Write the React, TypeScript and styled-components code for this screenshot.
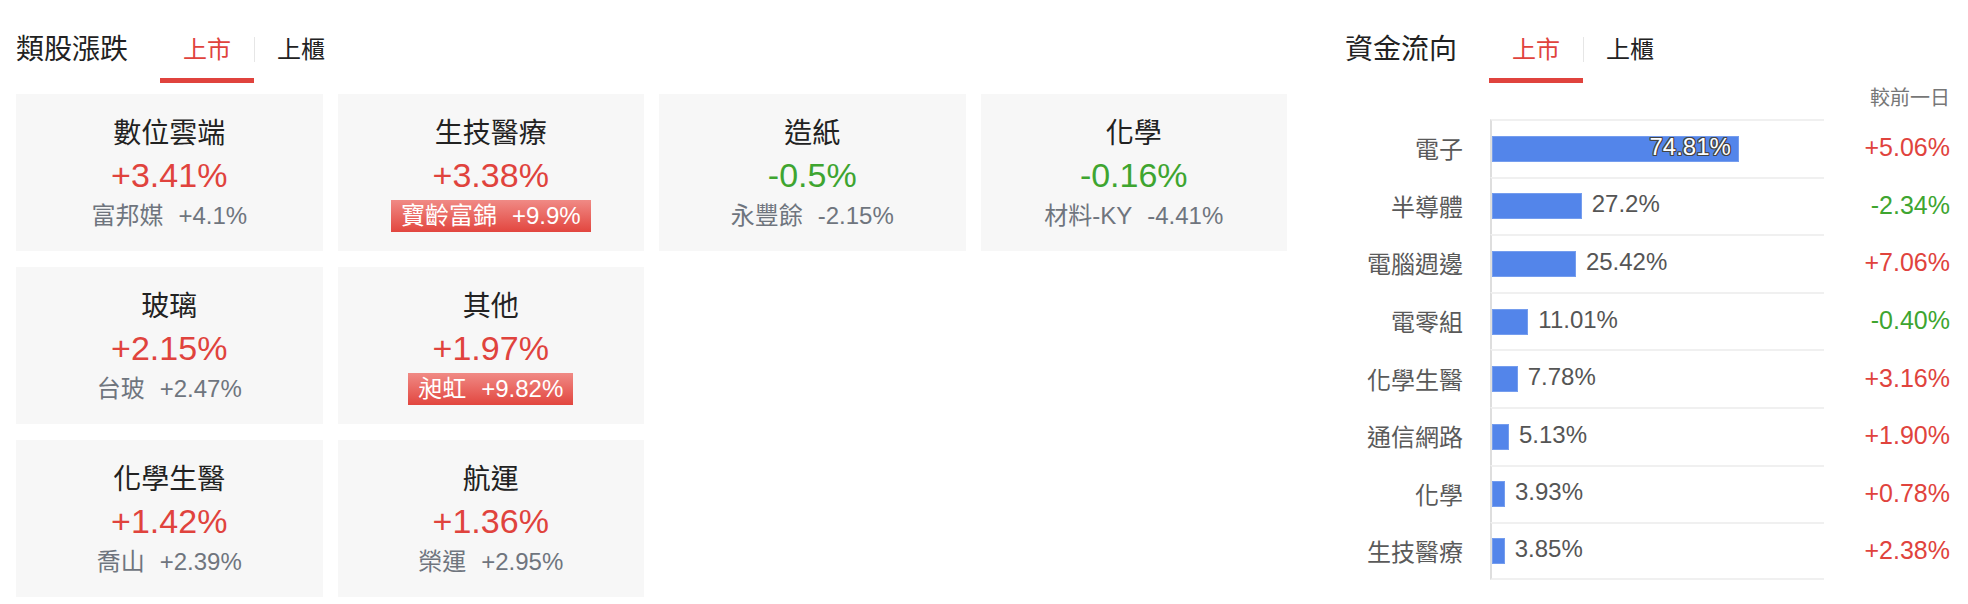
import React from "react";
import styled, { createGlobalStyle, css } from "styled-components";

const RED = "#e0433d";
const GREEN = "#3ea530";

const GlobalStyle = createGlobalStyle`
  html, body { margin: 0; padding: 0; background: #fff; }
  body {
    font-family: "Liberation Sans", "Noto Sans CJK TC", sans-serif;
    color: #222;
  }
  * { box-sizing: border-box; }
`;

const Page = styled.div`
  display: flex;
  gap: 58px;
  width: 1968px;
  padding: 31px 18px 0 16px;
`;

const LeftSection = styled.section`
  flex: none;
  width: 1271px;
`;

const RightSection = styled.section`
  flex: 1;
  min-width: 0;
`;

const Header = styled.div`
  display: flex;
  align-items: flex-start;
`;

const Title = styled.h2`
  margin: 0 32px 0 0;
  font-size: 28px;
  font-weight: 400;
  line-height: 38px;
  color: #222;
`;

const Tabs = styled.div`
  display: flex;
`;

const Tab = styled.div<{ $active?: boolean; $divider?: boolean }>`
  position: relative;
  padding: 0 23px 9px;
  font-size: 24px;
  line-height: 38px;
  color: ${(p) => (p.$active ? RED : "#222")};
  border-bottom: 5px solid ${(p) => (p.$active ? RED : "transparent")};
  cursor: pointer;
  ${(p) =>
    p.$divider &&
    css`
      &::before {
        content: "";
        position: absolute;
        left: 0;
        top: 6px;
        width: 1px;
        height: 25px;
        background: #e6e6e6;
      }
    `}
`;

const Grid = styled.div`
  display: grid;
  grid-template-columns: repeat(4, 1fr);
  gap: 16px 15px;
  margin-top: 11px;
`;

const Card = styled.div<{ $row: number; $col: number }>`
  grid-row: ${(p) => p.$row};
  grid-column: ${(p) => p.$col};
  display: flex;
  flex-direction: column;
  align-items: center;
  height: 157px;
  padding-top: 20px;
  background: #f7f7f7;
`;

const CardName = styled.div`
  font-size: 28px;
  line-height: 40px;
  color: #222;
`;

const CardPct = styled.div<{ $up: boolean }>`
  margin-top: 1px;
  font-size: 34px;
  line-height: 40px;
  color: ${(p) => (p.$up ? RED : GREEN)};
`;

const Leader = styled.div<{ $hot?: boolean }>`
  display: inline-flex;
  gap: 15px;
  margin-top: 5px;
  height: 32px;
  padding: 0 10px;
  font-size: 24px;
  line-height: 32px;
  color: #6f757e;
  ${(p) =>
    p.$hot &&
    css`
      color: #fff;
      background: linear-gradient(to bottom, #f08a85 0%, #e2463f 100%);
    `}
`;

const Note = styled.div`
  margin-bottom: 6px;
  font-size: 20px;
  line-height: 30px;
  text-align: right;
  color: #777;
`;

const Chart = styled.div`
  display: flex;
  flex-direction: column;
`;

const Row = styled.div`
  display: grid;
  grid-template-columns: 145px 334px 1fr;
  height: 57.6px;
`;

const Category = styled.div`
  display: flex;
  align-items: center;
  justify-content: flex-end;
  padding-right: 27px;
  font-size: 24px;
  color: #5a5a5a;
`;

const Track = styled.div<{ $last?: boolean }>`
  display: flex;
  align-items: center;
  border-top: 2px solid #f0f0f0;
  border-left: 2px solid #dedede;
  ${(p) => p.$last && css`border-bottom: 2px solid #f0f0f0;`}
`;

const Bar = styled.div`
  display: flex;
  align-items: center;
  justify-content: flex-end;
  height: 26px;
  background: #5385ea;
  box-shadow: inset 0 0 0 1px rgba(255, 255, 255, 0.2);
`;

const BarLabel = styled.span<{ $inside?: boolean }>`
  font-size: 24px;
  line-height: 26px;
  position: relative;
  top: -2px;
  ${(p) =>
    p.$inside
      ? css`
          padding-right: 8px;
          color: #fff;
          text-shadow: -1px -1px 0 #444, 1px -1px 0 #444, -1px 1px 0 #444,
            1px 1px 0 #444, 0 1px 0 #444, 0 -1px 0 #444, 1px 0 0 #444,
            -1px 0 0 #444;
        `
      : css`
          margin-left: 10px;
          color: #555;
        `}
`;

const Change = styled.div<{ $up: boolean }>`
  display: flex;
  align-items: center;
  justify-content: flex-end;
  font-size: 25px;
  color: ${(p) => (p.$up ? RED : GREEN)};
`;

type Sector = {
  name: string;
  pct: string;
  leader: string;
  leaderPct: string;
  hot?: boolean;
  row: number;
  col: number;
};

const sectors: Sector[] = [
  { name: "數位雲端", pct: "+3.41%", leader: "富邦媒", leaderPct: "+4.1%", row: 1, col: 1 },
  { name: "生技醫療", pct: "+3.38%", leader: "寶齡富錦", leaderPct: "+9.9%", hot: true, row: 1, col: 2 },
  { name: "造紙", pct: "-0.5%", leader: "永豐餘", leaderPct: "-2.15%", row: 1, col: 3 },
  { name: "化學", pct: "-0.16%", leader: "材料-KY", leaderPct: "-4.41%", row: 1, col: 4 },
  { name: "玻璃", pct: "+2.15%", leader: "台玻", leaderPct: "+2.47%", row: 2, col: 1 },
  { name: "其他", pct: "+1.97%", leader: "昶虹", leaderPct: "+9.82%", hot: true, row: 2, col: 2 },
  { name: "化學生醫", pct: "+1.42%", leader: "喬山", leaderPct: "+2.39%", row: 3, col: 1 },
  { name: "航運", pct: "+1.36%", leader: "榮運", leaderPct: "+2.95%", row: 3, col: 2 },
];

type Flow = { name: string; share: number; change: string };

const flows: Flow[] = [
  { name: "電子", share: 74.81, change: "+5.06%" },
  { name: "半導體", share: 27.2, change: "-2.34%" },
  { name: "電腦週邊", share: 25.42, change: "+7.06%" },
  { name: "電零組", share: 11.01, change: "-0.40%" },
  { name: "化學生醫", share: 7.78, change: "+3.16%" },
  { name: "通信網路", share: 5.13, change: "+1.90%" },
  { name: "化學", share: 3.93, change: "+0.78%" },
  { name: "生技醫療", share: 3.85, change: "+2.38%" },
];

const PX_PER_PCT = 3.3;

export default function App() {
  return (
    <>
      <GlobalStyle />
      <Page>
        <LeftSection>
          <Header>
            <Title>類股漲跌</Title>
            <Tabs>
              <Tab $active>上市</Tab>
              <Tab $divider>上櫃</Tab>
            </Tabs>
          </Header>
          <Grid>
            {sectors.map((s) => (
              <Card key={s.name} $row={s.row} $col={s.col}>
                <CardName>{s.name}</CardName>
                <CardPct $up={s.pct.startsWith("+")}>{s.pct}</CardPct>
                <Leader $hot={s.hot}>
                  <span>{s.leader}</span>
                  <span>{s.leaderPct}</span>
                </Leader>
              </Card>
            ))}
          </Grid>
        </LeftSection>
        <RightSection>
          <Header>
            <Title>資金流向</Title>
            <Tabs>
              <Tab $active>上市</Tab>
              <Tab $divider>上櫃</Tab>
            </Tabs>
          </Header>
          <Note>較前一日</Note>
          <Chart>
            {flows.map((f, i) => {
              const inside = f.share > 50;
              const label = `${f.share}%`;
              return (
                <Row key={f.name}>
                  <Category>{f.name}</Category>
                  <Track $last={i === flows.length - 1}>
                    <Bar style={{ width: `${f.share * PX_PER_PCT}px` }}>
                      {inside && <BarLabel $inside>{label}</BarLabel>}
                    </Bar>
                    {!inside && <BarLabel>{label}</BarLabel>}
                  </Track>
                  <Change $up={f.change.startsWith("+")}>{f.change}</Change>
                </Row>
              );
            })}
          </Chart>
        </RightSection>
      </Page>
    </>
  );
}
